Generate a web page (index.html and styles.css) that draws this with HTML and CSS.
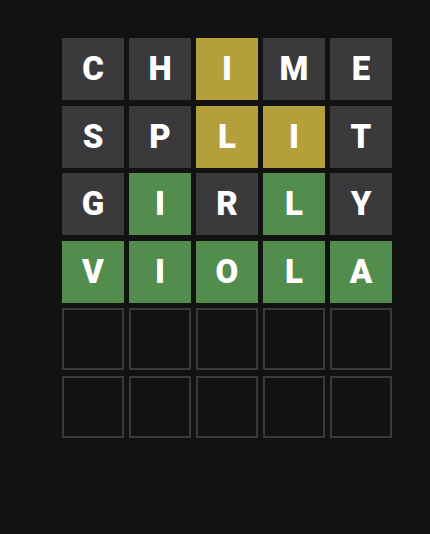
FILE: index.html
```html
<!DOCTYPE html>
<html lang="en">
<head>
<meta charset="utf-8">
<meta name="viewport" content="width=device-width, initial-scale=1">
<title>Word board</title>
<link rel="stylesheet" href="styles.css">
</head>
<body>
<main class="game">
  <div class="board">
    <div class="row">
      <div class="tile absent">C</div><div class="tile absent">H</div><div class="tile present">I</div><div class="tile absent">M</div><div class="tile absent">E</div>
    </div>
    <div class="row">
      <div class="tile absent">S</div><div class="tile absent">P</div><div class="tile present">L</div><div class="tile present">I</div><div class="tile absent">T</div>
    </div>
    <div class="row">
      <div class="tile absent">G</div><div class="tile correct">I</div><div class="tile absent">R</div><div class="tile correct">L</div><div class="tile absent">Y</div>
    </div>
    <div class="row">
      <div class="tile correct">V</div><div class="tile correct">I</div><div class="tile correct">O</div><div class="tile correct">L</div><div class="tile correct">A</div>
    </div>
    <div class="row">
      <div class="tile"></div><div class="tile"></div><div class="tile"></div><div class="tile"></div><div class="tile"></div>
    </div>
    <div class="row">
      <div class="tile"></div><div class="tile"></div><div class="tile"></div><div class="tile"></div><div class="tile"></div>
    </div>
  </div>
</main>
</body>
</html>
```
FILE: styles.css
```css
* {
  box-sizing: border-box;
}

body {
  margin: 0;
  background: #121213;
  color: #fff;
  font-family: Roboto, "Liberation Sans", sans-serif;
}

.game {
  display: flex;
  justify-content: center;
  padding: 38px 0 38px 24px;
}

.board {
  display: grid;
  grid-template-rows: repeat(6, 1fr);
  gap: 5px;
  height: 400px;
}

.row {
  display: grid;
  grid-template-columns: repeat(5, 62px);
  gap: 5px;
  align-items: start;
}

.tile {
  display: flex;
  align-items: center;
  justify-content: center;
  height: 62px;
  border: 2px solid #3a3a3c;
  font-size: 33px;
  line-height: 32px;
  font-weight: 900;
}

.absent {
  background: #3a3a3c;
}

.present {
  background: #b59f3b;
  border-color: #b59f3b;
}

.correct {
  background: #538d4e;
  border-color: #538d4e;
}
```
